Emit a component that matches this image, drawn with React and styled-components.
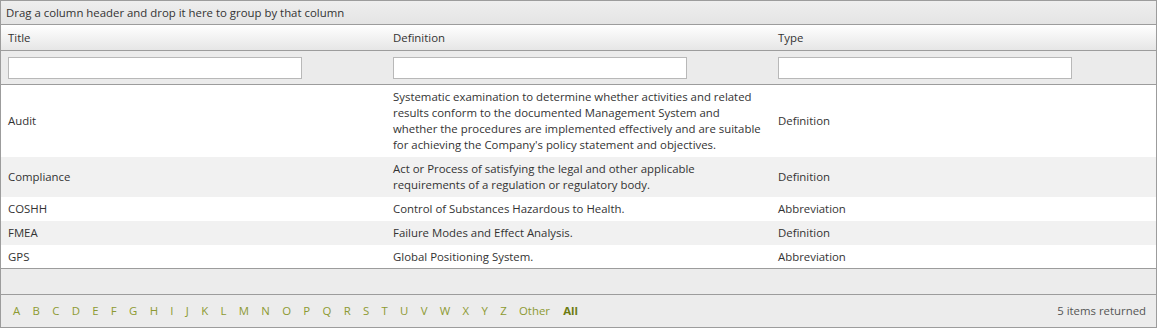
import React from 'react';
import styled, { createGlobalStyle } from 'styled-components';

const GlobalStyle = createGlobalStyle`
    body {
        margin: 0;
        background: #fff;
        font-family: "Open Sans", "Noto Sans", sans-serif;
        font-size: 11.4px;
        color: #333;
    }
`;

const Grid = styled.div`
    width: 1157px;
    height: 328px;
    box-sizing: border-box;
    border: 1px solid #9c9c9c;
    display: flex;
    flex-direction: column;
    background: #fff;
`;

const GroupPanel = styled.div`
    height: 23px;
    padding: 0 5px;
    display: flex;
    align-items: center;
    background: linear-gradient(#eeeeee, #e4e4e4);
    border-bottom: 1px solid #9c9c9c;
`;

const Row = styled.div`
    display: grid;
    grid-template-columns: 385px 385px 1fr;
    align-items: center;
    min-height: ${p => p.$h || 24}px;
    background: ${p => p.$bg || '#fff'};
    border-bottom: ${p => p.$line ? '1px solid #9c9c9c' : 'none'};
`;

const HeaderRow = styled(Row)`
    background: linear-gradient(#ffffff, #e6e6e6);
`;

const Cell = styled.div`
    padding: 0 7px;
    line-height: 16px;
`;

const DefText = styled.div`
    white-space: pre-line;
`;

const FilterInput = styled.input`
    display: block;
    width: 294px;
    height: 22px;
    box-sizing: border-box;
    border: 1px solid #b8b8b8;
    background: #fff;
    margin: 0;
`;

const Body = styled.div`
    border-bottom: 1px solid #9c9c9c;
`;

const Spacer = styled.div`
    height: 25px;
    background: #ececec;
    border-bottom: 1px solid #9c9c9c;
`;

const Footer = styled.div`
    flex: 1;
    background: #ececec;
    display: flex;
    align-items: center;
    justify-content: space-between;
    padding: 0 10px 1px 12px;
`;

const Letters = styled.div`
    display: flex;
    gap: 12.3px;
`;

const Letter = styled.span`
    color: ${p => p.$bold ? '#6d7c12' : '#8c9a32'};
    font-weight: ${p => p.$bold ? 700 : 400};
    margin-left: ${p => p.$bold ? 1 : 0}px;
`;

const Count = styled.span`
    color: #555;
`;

const rows = [
    {
        title: 'Audit',
        def: "Systematic examination to determine whether activities and related\nresults conform to the documented Management System and\nwhether the procedures are implemented effectively and are suitable\nfor achieving the Company's policy statement and objectives.",
        type: 'Definition',
        h: 72,
    },
    {
        title: 'Compliance',
        def: 'Act or Process of satisfying the legal and other applicable\nrequirements of a regulation or regulatory body.',
        type: 'Definition',
        h: 40,
    },
    { title: 'COSHH', def: 'Control of Substances Hazardous to Health.', type: 'Abbreviation', h: 24 },
    { title: 'FMEA', def: 'Failure Modes and Effect Analysis.', type: 'Definition', h: 24 },
    { title: 'GPS', def: 'Global Positioning System.', type: 'Abbreviation', h: 23 },
];

const letters = 'ABCDEFGHIJKLMNOPQRSTUVWXYZ'.split('');

export default function App() {
    return (
        <>
            <GlobalStyle />
            <Grid>
                <GroupPanel>Drag a column header and drop it here to group by that column</GroupPanel>
                <HeaderRow $h={25} $line>
                    <Cell>Title</Cell>
                    <Cell>Definition</Cell>
                    <Cell>Type</Cell>
                </HeaderRow>
                <Row $h={33} $bg="#ebebeb" $line>
                    <Cell><FilterInput /></Cell>
                    <Cell><FilterInput /></Cell>
                    <Cell><FilterInput /></Cell>
                </Row>
                <Body>
                    {rows.map((r, i) => (
                        <Row key={r.title} $h={r.h} $bg={i % 2 ? '#f1f1f1' : '#fff'}>
                            <Cell>{r.title}</Cell>
                            <Cell><DefText>{r.def}</DefText></Cell>
                            <Cell>{r.type}</Cell>
                        </Row>
                    ))}
                </Body>
                <Spacer />
                <Footer>
                    <Letters>
                        {letters.map(l => <Letter key={l}>{l}</Letter>)}
                        <Letter>Other</Letter>
                        <Letter $bold>All</Letter>
                    </Letters>
                    <Count>5 items returned</Count>
                </Footer>
            </Grid>
        </>
    );
}
